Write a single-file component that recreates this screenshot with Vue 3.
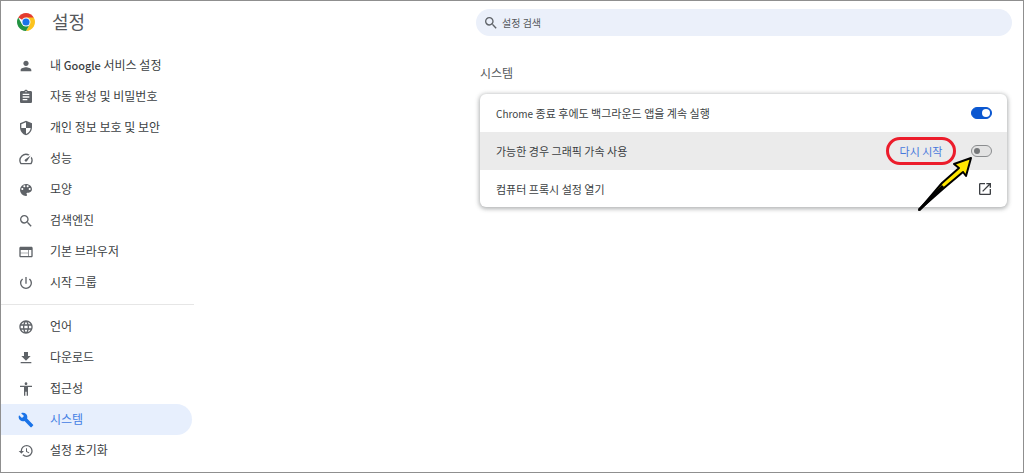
<script setup>
import { ref } from 'vue'

const primary = [
  { label: '내 Google 서비스 설정', brand: true, d: 'M12 12c2.21 0 4-1.79 4-4s-1.79-4-4-4-4 1.79-4 4 1.79 4 4 4zm0 2c-2.67 0-8 1.34-8 4v2h16v-2c0-2.66-5.33-4-8-4z' },
  { label: '자동 완성 및 비밀번호', d: 'M19 3h-4.18C14.4 1.84 13.3 1 12 1s-2.4.84-2.82 2H5c-1.1 0-2 .9-2 2v14c0 1.1.9 2 2 2h14c1.1 0 2-.9 2-2V5c0-1.1-.9-2-2-2zm-7 0c.55 0 1 .45 1 1s-.45 1-1 1-1-.45-1-1 .45-1 1-1zm2 14H7v-2h7v2zm3-4H7v-2h10v2zm0-4H7V7h10v2z' },
  { label: '개인 정보 보호 및 보안', d: 'M12 1 3 5v6c0 5.55 3.84 10.74 9 12 5.16-1.26 9-6.45 9-12V5l-9-4zm0 10.99h7c-.53 4.12-3.28 7.79-7 8.94V12H5V6.3l7-3.11v8.8z' },
  { label: '성능', d: 'm20.38 8.57-1.23 1.85a8 8 0 0 1-.22 7.58H5.07A8 8 0 0 1 15.58 6.85l1.85-1.23A10 10 0 0 0 3.35 19a2 2 0 0 0 1.72 1h13.85a2 2 0 0 0 1.74-1 10 10 0 0 0-.27-10.44zm-9.79 6.84a2 2 0 0 0 2.83 0l5.66-8.49-8.49 5.66a2 2 0 0 0 0 2.83z' },
  { label: '모양', d: 'M12 3a9 9 0 0 0 0 18c.83 0 1.5-.67 1.5-1.5 0-.39-.15-.74-.39-1.01-.23-.26-.38-.61-.38-.99 0-.83.67-1.5 1.5-1.5H16c2.76 0 5-2.24 5-5 0-4.42-4.03-8-9-8zm-5.5 9c-.83 0-1.5-.67-1.5-1.5S5.67 9 6.5 9 8 9.67 8 10.5 7.33 12 6.5 12zm3-4C8.67 8 8 7.33 8 6.5S8.67 5 9.5 5s1.5.67 1.5 1.5S10.33 8 9.5 8zm5 0c-.83 0-1.5-.67-1.5-1.5S13.67 5 14.5 5s1.5.67 1.5 1.5S15.33 8 14.5 8zm3 4c-.83 0-1.5-.67-1.5-1.5S16.67 9 17.5 9s1.5.67 1.5 1.5-.67 1.5-1.5 1.5z' },
  { label: '검색엔진', d: 'M15.5 14h-.79l-.28-.27A6.47 6.47 0 0 0 16 9.5 6.5 6.5 0 1 0 9.5 16c1.61 0 3.09-.59 4.23-1.57l.27.28v.79l5 4.99L20.49 19l-4.99-5zm-6 0C7.01 14 5 11.99 5 9.5S7.01 5 9.5 5 14 7.01 14 9.5 11.99 14 9.5 14z' },
  { label: '기본 브라우저', d: 'M20 4H4c-1.1 0-1.99.9-1.99 2L2 18c0 1.1.9 2 2 2h16c1.1 0 2-.9 2-2V6c0-1.1-.9-2-2-2zm-5 14H4v-4h11v4zm0-5H4V9h11v4zm5 5h-4V9h4v9z' },
  { label: '시작 그룹', d: 'M13 3h-2v10h2V3zm4.83 2.17-1.42 1.42A6.92 6.92 0 0 1 19 12c0 3.87-3.13 7-7 7s-7-3.13-7-7c0-2.19 1.01-4.14 2.58-5.42L6.17 5.17A8.93 8.93 0 0 0 3 12a9 9 0 0 0 18 0c0-2.74-1.23-5.18-3.17-6.83z' },
]

const secondary = [
  { label: '언어', d: 'M11.99 2C6.47 2 2 6.48 2 12s4.47 10 9.99 10C17.52 22 22 17.52 22 12S17.52 2 11.99 2zm6.93 6h-2.95a15.65 15.65 0 0 0-1.38-3.56A8.03 8.03 0 0 1 18.92 8zM12 4.04c.83 1.2 1.48 2.53 1.91 3.96h-3.82c.43-1.43 1.08-2.76 1.91-3.96zM4.26 14C4.1 13.36 4 12.69 4 12s.1-1.36.26-2h3.38c-.08.66-.14 1.32-.14 2s.06 1.34.14 2H4.26zm.82 2h2.95c.32 1.25.78 2.45 1.38 3.56A7.99 7.99 0 0 1 5.08 16zm2.95-8H5.08a7.99 7.99 0 0 1 4.33-3.56A15.65 15.65 0 0 0 8.03 8zM12 19.96c-.83-1.2-1.48-2.53-1.91-3.96h3.82c-.43 1.43-1.08 2.76-1.91 3.96zM14.34 14H9.66c-.09-.66-.16-1.32-.16-2s.07-1.35.16-2h4.68c.09.65.16 1.32.16 2s-.07 1.34-.16 2zm.25 5.56c.6-1.11 1.06-2.31 1.38-3.56h2.95a8.03 8.03 0 0 1-4.33 3.56zM16.36 14c.08-.66.14-1.32.14-2s-.06-1.34-.14-2h3.38c.16.64.26 1.31.26 2s-.1 1.36-.26 2h-3.38z' },
  { label: '다운로드', d: 'M19 9h-4V3H9v6H5l7 7 7-7zM4 18v2h16v-2H4z' },
  { label: '접근성', d: 'M12 2c1.1 0 2 .9 2 2s-.9 2-2 2-2-.9-2-2 .9-2 2-2zm9 7h-6v13h-2v-6h-2v6H9V9H3V7h18v2z' },
  { label: '시스템', active: true, d: 'm22.7 19-9.1-9.1c.9-2.3.4-5-1.5-6.9-2-2-5-2.4-7.4-1.3L9 6 6 9 1.6 4.7C.4 7.1.9 10.1 2.9 12.1c1.9 1.9 4.6 2.4 6.9 1.5l9.1 9.1c.4.4 1 .4 1.4 0l2.3-2.3c.5-.4.5-1.1.1-1.4z' },
  { label: '설정 초기화', d: 'M13 3a9 9 0 0 0-9 9H1l3.89 3.89.07.14L9 12H6c0-3.87 3.13-7 7-7s7 3.13 7 7-3.13 7-7 7c-1.93 0-3.68-.79-4.94-2.06l-1.42 1.42A8.95 8.95 0 0 0 13 21a9 9 0 0 0 0-18zm-1 5v5l4.28 2.54.72-1.21-3.5-2.08V8H12z' },
]

const groups = [primary, secondary]
const background = ref(true)
const graphics = ref(false)
const query = ref('')
</script>

<template>
  <div class="page">
    <aside class="side">
      <header class="brand">
        <svg class="logo" viewBox="0 0 48 48" aria-hidden="true">
          <path fill="#e33b2e" d="M24 24 3.22 12A24 24 0 0 1 44.78 12z" />
          <path fill="#fcc31e" d="M24 12h20.78A24 24 0 0 1 24 48l10.4-18z" />
          <path fill="#229342" d="M3.22 12A24 24 0 0 0 24 48l10.4-18H13.6z" />
          <circle cx="24" cy="24" r="12" fill="#fff" />
          <circle cx="24" cy="24" r="9.5" fill="#1a73e8" />
        </svg>
        <h1>설정</h1>
      </header>
      <nav aria-label="설정">
        <ul v-for="(group, i) in groups" :key="i" class="group">
          <li v-for="item in group" :key="item.label">
            <a href="#" class="item" :class="{ active: item.active }">
              <svg class="icon" viewBox="0 0 24 24" aria-hidden="true"><path :d="item.d" /></svg>
              <span v-if="item.brand" class="label">내 <span class="google">Google</span> 서비스 설정</span>
              <span v-else class="label">{{ item.label }}</span>
            </a>
          </li>
        </ul>
      </nav>
    </aside>

    <main class="main">
      <label class="search">
        <svg class="icon" viewBox="0 0 24 24" aria-hidden="true"><path :d="primary[5].d" /></svg>
        <input v-model="query" type="search" placeholder="설정 검색" aria-label="설정 검색" />
      </label>
      <section class="section">
        <h2>시스템</h2>
        <div class="card">
          <div class="row">
            <label class="text" for="background"><span class="chrome">Chrome</span> 종료 후에도 백그라운드 앱을 계속 실행</label>
            <input id="background" v-model="background" class="toggle" type="checkbox" role="switch" />
          </div>
          <div class="row shaded">
            <label class="text" for="graphics">가능한 경우 그래픽 가속 사용</label>
            <button type="button" class="restart">다시 시작</button>
            <input id="graphics" v-model="graphics" class="toggle" type="checkbox" role="switch" />
            <svg class="arrow" viewBox="0 0 58 58" aria-hidden="true">
              <path class="head" d="M55 3 38 9l5 4-17 15L3 55l25-22 19-16 3 4z" />
              <path class="shaft" d="M3 55 27 31" />
            </svg>
          </div>
          <a href="#" class="row">
            <span class="text">컴퓨터 프록시 설정 열기</span>
            <svg class="open" viewBox="0 0 24 24" aria-hidden="true">
              <path d="M19 19H5V5h7V3H5a2 2 0 0 0-2 2v14a2 2 0 0 0 2 2h14c1.1 0 2-.9 2-2v-7h-2v7zM14 3v2h3.59l-9.83 9.83 1.41 1.41L19 6.41V10h2V3h-7z" />
            </svg>
          </a>
        </div>
      </section>
    </main>
  </div>
</template>

<style>
body {
  margin: 0;
}
</style>

<style scoped>
.page {
  box-sizing: border-box;
  min-height: 100vh;
  display: grid;
  grid-template-columns: 475px minmax(0, 1fr);
  border: 1px solid #8f8f8f;
  background: #fff;
  color: #3c3f43;
  font-family: "Noto Sans CJK KR", "Noto Sans", sans-serif;
  font-size: 12px;
}
.side {
  width: 193px;
}
.brand {
  display: flex;
  align-items: center;
  gap: 17px;
  height: 42px;
  padding-left: 16px;
  margin-bottom: 7px;
}
.logo {
  width: 18px;
  height: 18px;
}
h1 {
  margin: 0;
  padding-bottom: 2px;
  font-size: 18px;
  line-height: 24px;
  font-weight: 400;
  color: #55585c;
}
.group {
  list-style: none;
  margin: 0;
  padding: 0;
}
.group + .group {
  margin-top: 6px;
  padding-top: 6px;
  border-top: 1px solid #e6e6e6;
}
.item {
  display: flex;
  align-items: center;
  gap: 16px;
  height: 31px;
  margin-right: 2px;
  padding-left: 17px;
  border-radius: 0 16px 16px 0;
  color: inherit;
  text-decoration: none;
  white-space: nowrap;
}
.icon {
  flex: none;
  width: 16px;
  height: 16px;
  fill: #5f6368;
}
.label {
  padding-bottom: 2px;
}
.google {
  font-size: 11px;
  font-weight: 500;
}
.chrome {
  font-size: 10px;
}
.active {
  background: #e7effd;
  color: #4480e4;
}
.active .icon {
  fill: #1a73e8;
}
.main {
  padding: 8px 11px 0 0;
}
.search {
  display: flex;
  align-items: center;
  gap: 3px;
  height: 27px;
  padding: 0 7px;
  border-radius: 14px;
  background: #ebf0fa;
}
.search input {
  flex: 1;
  min-width: 0;
  padding: 0;
  border: 0;
  outline: 0;
  background: none;
  color: inherit;
  font-family: inherit;
  font-size: 10px;
}
.search input::placeholder {
  color: #55585c;
  opacity: 1;
}
.section {
  padding: 28px 5px 0 4px;
}
h2 {
  margin: 0 0 12px;
  font-size: 12px;
  line-height: 18px;
  font-weight: 400;
  color: #55585c;
}
.card {
  border-radius: 6px;
  background: #fff;
  box-shadow: 0 1px 4px 1px rgba(60, 64, 67, 0.4);
}
.row {
  position: relative;
  display: flex;
  align-items: center;
  gap: 15px;
  height: 38px;
  padding: 0 15px 0 16px;
  color: inherit;
  font-size: 11px;
  text-decoration: none;
}
.row:last-child {
  height: 37px;
}
.shaded {
  background: #ebebeb;
}
.text {
  flex: 1;
}
.restart {
  width: 70px;
  height: 28px;
  padding: 0;
  border: 3px solid #ec1c2b;
  border-radius: 14px;
  background: none;
  color: #4878dc;
  font-family: inherit;
  font-size: 11px;
}
.toggle {
  appearance: none;
  box-sizing: border-box;
  display: flex;
  align-items: center;
  width: 21px;
  height: 12px;
  margin: 0;
  padding: 0 2px;
  border: 1px solid #8b8d8f;
  border-radius: 6px;
  background: #e3e3e3;
}
.toggle::before {
  content: "";
  width: 6px;
  height: 6px;
  border-radius: 50%;
  background: #757779;
}
.toggle:checked {
  justify-content: flex-end;
  padding: 0 1px;
  border-color: #0b57d0;
  background: #0b57d0;
}
.toggle:checked::before {
  width: 8px;
  height: 8px;
  background: #fff;
}
.open {
  width: 16px;
  height: 16px;
  margin-right: -1px;
  fill: #3c3f43;
}
.arrow {
  position: absolute;
  z-index: 1;
  top: 23px;
  right: 33px;
  width: 58px;
  height: 58px;
}
.shaft {
  fill: none;
  stroke: #000;
  stroke-width: 3;
}
.head {
  fill: #ffe600;
  stroke: #000;
  stroke-width: 2;
  stroke-linejoin: round;
}
</style>
